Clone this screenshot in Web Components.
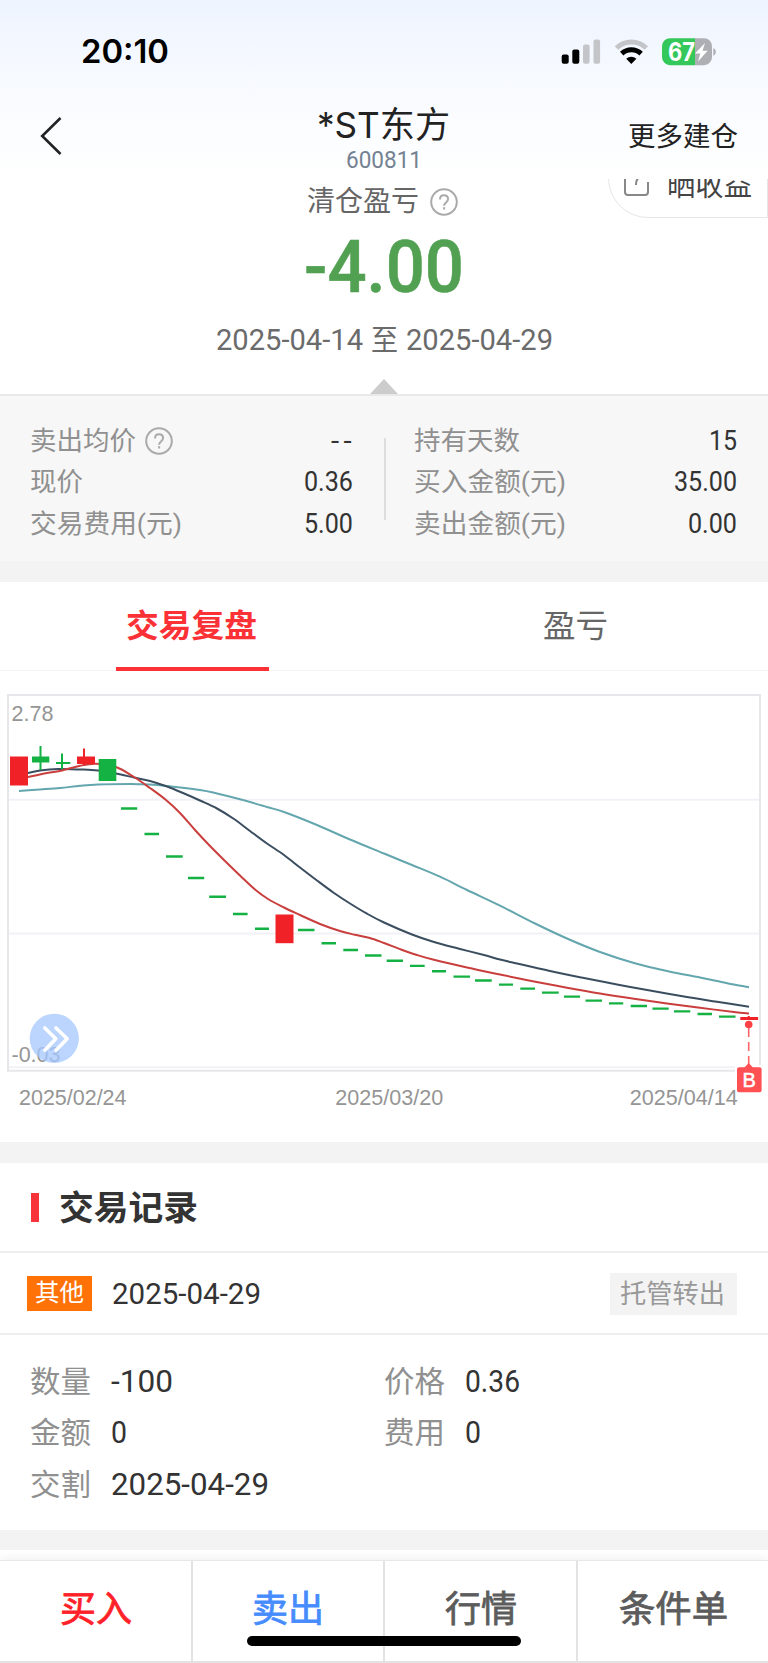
<!DOCTYPE html>
<html lang="zh-CN">
<head>
<meta charset="utf-8">
<title>*ST东方 600811</title>
<style>
  body {
    margin: 0;
    background: #fff;
    color: #333;
    font-family: Roboto, "Noto Sans CJK SC", sans-serif;
  }
</style>
</head>
<body>
<stock-page></stock-page>

<script>
// Text squeezed or stretched horizontally to a given width
class FitText extends HTMLElement {
  constructor() {
    super();
    this.attachShadow({ mode: "open" });
  }

  static get styles() {
    return /* css */`
      :host {
        display: inline-block;
        flex: none;
        white-space: nowrap;
      }

      span {
        display: inline-block;
        transform-origin: 0 50%;
      }
    `;
  }

  connectedCallback() {
    this.shadowRoot.innerHTML = /* html */`
    <style>${FitText.styles}</style>
    <span><slot></slot></span>`;
    const span = this.shadowRoot.querySelector("span");
    const width = Number(this.getAttribute("w"));
    const natural = span.getBoundingClientRect().width;
    if (width && natural) {
      span.style.transform = `scaleX(${width / natural})`;
      this.style.width = `${width}px`;
    }
  }
}

class StatusBar extends HTMLElement {
  constructor() {
    super();
    this.attachShadow({ mode: "open" });
  }

  static get styles() {
    return /* css */`
      :host {
        display: flex;
        justify-content: space-between;
        align-items: center;
        height: 103px;
        padding: 0 52px 0 81px;
        box-sizing: border-box;
        font-family: Inter, sans-serif;
        color: #000;
      }

      .time {
        font-size: 32px;
        font-weight: 600;
        line-height: 40px;
      }

      .icons {
        display: block;
      }
    `;
  }

  connectedCallback() {
    this.shadowRoot.innerHTML = /* html */`
    <style>${StatusBar.styles}</style>
    <fit-text class="time" w="88">20:10</fit-text>
    <svg class="icons" width="155" height="30" viewBox="561 36.5 155 30">
      <rect x="561.7" y="54" width="7" height="9.2" rx="2"/>
      <rect x="572.3" y="49" width="7" height="14.2" rx="2"/>
      <g fill="#c3c5c9">
        <rect x="583" y="44" width="6.6" height="19.2" rx="2"/>
        <rect x="593.5" y="39" width="6.6" height="24.2" rx="2"/>
      </g>
      <g fill="none" stroke-width="5">
        <path d="M616.5 47.5a21.3 21.3 0 0 1 29.8 0" stroke="#c3c5c9"/>
        <path d="M621.7 53.2a14.2 14.2 0 0 1 19.4 0" stroke="#000"/>
      </g>
      <path d="M626.2 58.2a7.8 7.8 0 0 1 10.2 0l-5.1 5.4z"/>
      <path d="M670 37.7h25v27h-25a8 8 0 0 1-8-8v-11a8 8 0 0 1 8-8z" fill="#34c759"/>
      <path d="M695 37.7h9a8 8 0 0 1 8 8v11a8 8 0 0 1-8 8h-9z" fill="#adafb4"/>
      <path d="M713.3 47.5q2.6 1.2 2.6 4t-2.6 4z" fill="#adafb4"/>
      <text x="668" y="60" font-size="25" font-weight="700" fill="#fff" textLength="27" lengthAdjust="spacingAndGlyphs">67</text>
      <path d="M705 42.5l-10 10.5h5.3l-2.3 8 9.7-10.7h-5.2z" fill="#fff"/>
    </svg>`;
  }
}

class NavBar extends HTMLElement {
  constructor() {
    super();
    this.attachShadow({ mode: "open" });
  }

  static get styles() {
    return /* css */`
      :host {
        display: grid;
        grid-template-columns: 1fr auto 1fr;
        align-items: start;
        height: 76px;
      }

      .back {
        margin: 13px 0 0 39px;
      }

      .title {
        display: flex;
        flex-direction: column;
        align-items: center;
        padding-top: 3px;
        color: #222;
      }

      .name {
        margin-right: 1px;
        font-family: Inter, "Noto Sans CJK SC", sans-serif;
        font-size: 36px;
        line-height: 38px;
      }

      .code {
        margin-top: 4px;
        font-size: 24px;
        line-height: 24px;
        color: #748292;
      }

      .more {
        justify-self: end;
        margin: 16px 30px 0 0;
        font-size: 27px;
        line-height: 36px;
        color: #222;
      }
    `;
  }

  connectedCallback() {
    this.shadowRoot.innerHTML = /* html */`
    <style>${NavBar.styles}</style>
    <svg class="back" width="24" height="40" viewBox="0 0 24 40" fill="none" stroke="#222" stroke-width="2.6">
      <path d="M21.5 2 3.2 20l18.3 18"/>
    </svg>
    <div class="title">
      <fit-text class="name" w="133">*ST东方</fit-text>
      <fit-text class="code" w="76">600811</fit-text>
    </div>
    <fit-text class="more" w="110">更多建仓</fit-text>`;
  }
}

class HelpIcon extends HTMLElement {
  constructor() {
    super();
    this.attachShadow({ mode: "open" });
  }

  connectedCallback() {
    this.shadowRoot.innerHTML = /* html */`
    <style>
      :host { display: inline-block; flex: none; width: 28px; height: 28px; }
      svg { display: block; }
    </style>
    <svg width="28" height="28" viewBox="0 0 28 28" fill="none" stroke="#aaa" stroke-width="2">
      <circle cx="14" cy="14" r="12.8"/>
      <path d="M10 11.4c0-2.5 1.6-4.2 4-4.2s4.1 1.5 4.1 3.9c0 3.2-4 3.4-4 6.6"/>
      <path d="M14.1 19.2v2.3"/>
    </svg>`;
  }
}

class ProfitSummary extends HTMLElement {
  constructor() {
    super();
    this.attachShadow({ mode: "open" });
  }

  static get styles() {
    return /* css */`
      :host {
        display: flex;
        flex-direction: column;
        align-items: center;
        height: 217px;
        box-sizing: border-box;
        border-bottom: 2px solid #e9e9e9;
        position: relative;
        overflow: hidden;
      }

      .label {
        display: flex;
        align-items: center;
        gap: 11px;
        height: 46px;
        padding-right: 4px;
        font-size: 28px;
        line-height: 40px;
        color: #666;
      }

      .amount {
        font-size: 73px;
        line-height: 84px;
        font-weight: 500;
        -webkit-text-stroke: .6px;
        color: #52a052;
      }

      .period {
        display: flex;
        gap: 8px;
        margin-top: 11px;
        font-size: 30px;
        line-height: 40px;
        color: #6b6b6b;
      }

      .arrow {
        width: 28px;
        height: 15px;
        margin-top: auto;
        background: #ccc;
        clip-path: polygon(50% 0, 100% 100%, 0 100%);
      }

      /* floats over the summary, half scrolled under the header */
      .share {
        position: absolute;
        left: 608px;
        top: -42px;
        width: 160px;
        height: 81px;
        box-sizing: border-box;
        border: 1px solid #e6e6e6;
        border-radius: 40px 0 0 40px;
        display: flex;
        align-items: center;
        gap: 18px;
        padding: 18px 0 0 15px;
        font-size: 28px;
        line-height: 40px;
        color: #444;
      }

      .share svg {
        margin-bottom: 5px;
      }
    `;
  }

  connectedCallback() {
    this.shadowRoot.innerHTML = /* html */`
    <style>${ProfitSummary.styles}</style>
    <div class="label"><fit-text w="112">清仓盈亏</fit-text><help-icon></help-icon></div>
    <fit-text class="amount" w="160">-4.00</fit-text>
    <div class="period">
      <fit-text w="147">2025-04-14</fit-text>
      <fit-text w="27">至</fit-text>
      <fit-text w="147">2025-04-29</fit-text>
    </div>
    <div class="arrow"></div>
    <div class="share">
      <svg width="25" height="26" viewBox="0 0 25 26" fill="none" stroke="#888" stroke-width="2">
        <path d="M8 2H4a3 3 0 0 0-3 3v16a3 3 0 0 0 3 3h17a3 3 0 0 0 3-3V11M12 14c0-7 4-10 9-11"/>
      </svg>
      <fit-text w="85">晒收益</fit-text>
    </div>`;
  }
}

class StatItem extends HTMLElement {
  constructor() {
    super();
    this.attachShadow({ mode: "open" });
  }

  static get styles() {
    return /* css */`
      :host {
        display: flex;
        justify-content: space-between;
        align-items: center;
        height: 41.5px;
        line-height: 40px;
      }

      .label {
        display: flex;
        align-items: center;
        gap: 9px;
        font-size: 26.4px;
        color: #909090;
      }

      .value {
        font-size: 27px;
      }

      .empty {
        letter-spacing: 4px;
        margin-right: -3px;
      }
    `;
  }

  connectedCallback() {
    const [labelWidth, valueWidth] = this.getAttribute("widths").split(" ");
    const value = this.getAttribute("value");
    this.shadowRoot.innerHTML = /* html */`
    <style>${StatItem.styles}</style>
    <span class="label">
      <fit-text w="${labelWidth}">${this.getAttribute("label")}</fit-text>
      ${this.hasAttribute("help") ? "<help-icon></help-icon>" : ""}
    </span>
    <fit-text class="value ${value === "--" ? "empty" : ""}" w="${valueWidth}">${value}</fit-text>`;
  }
}

class StatsPanel extends HTMLElement {
  constructor() {
    super();
    this.attachShadow({ mode: "open" });
  }

  static get styles() {
    return /* css */`
      :host {
        display: grid;
        grid-template-columns: 323px 2px 320px;
        gap: 31px;
        height: 165px;
        box-sizing: border-box;
        padding: 24px 31px 0 30px;
        background: #f7f7f7;
      }

      .line {
        height: 82px;
        margin-top: 18px;
        background: #ddd;
      }

      .line + div {
        margin-left: -3px;
      }
    `;
  }

  connectedCallback() {
    this.shadowRoot.innerHTML = /* html */`
    <style>${StatsPanel.styles}</style>
    <div>
      <stat-item label="卖出均价" value="--" widths="106 25" help></stat-item>
      <stat-item label="现价" value="0.36" widths="53 49"></stat-item>
      <stat-item label="交易费用(元)" value="5.00" widths="152 49"></stat-item>
    </div>
    <div class="line"></div>
    <div>
      <stat-item label="持有天数" value="15" widths="106 28"></stat-item>
      <stat-item label="买入金额(元)" value="35.00" widths="152 63"></stat-item>
      <stat-item label="卖出金额(元)" value="0.00" widths="152 49"></stat-item>
    </div>`;
  }
}

class ReviewTabs extends HTMLElement {
  constructor() {
    super();
    this.attachShadow({ mode: "open" });
  }

  static get styles() {
    return /* css */`
      :host {
        display: grid;
        grid-template-columns: 1fr 1fr;
        justify-items: center;
        height: 89px;
        box-sizing: border-box;
        border-bottom: 1px solid #f5f5f5;
        font-size: 32px;
        line-height: 89px;
        color: #666;
      }

      .tab {
        height: 89px;
        box-sizing: border-box;
        padding-right: 2px;
      }

      .active {
        width: 153px;
        padding-right: 3px;
        text-align: center;
        font-weight: 700;
        color: #fb3136;
        border-bottom: 4px solid #fb3136;
      }
    `;
  }

  connectedCallback() {
    this.shadowRoot.innerHTML = /* html */`
    <style>${ReviewTabs.styles}</style>
    <div class="tab active"><fit-text w="131">交易复盘</fit-text></div>
    <div class="tab"><fit-text w="65">盈亏</fit-text></div>`;
  }
}

const UP = "#f02228";
const DOWN = "#14b143";

// x, width, top, height, colour, then the wick: x, top, bottom
const CANDLES = [
  [10, 18, 756.5, 29, UP],
  [32, 17.3, 756.5, 6, DOWN, 40.5, 746, 770],
  [56, 14.3, 762, 2, DOWN, 62, 753.5, 769],
  [77, 18, 756.5, 7.5, UP, 84, 748.5, 765],
  [98.7, 17.6, 759, 22, DOWN],
  [275.5, 18, 914.5, 28.7, UP],
  [740.3, 17.8, 1017, 3, UP, 748.8, 1016, 1020]
];

// limit-down days: x1, x2, y
const DASHES = [
  [121, 137.2, 808.5], [144.5, 159, 834], [166, 182.7, 856.5], [188, 204.2, 878],
  [209.2, 226, 896.7], [233, 247.6, 914], [255, 269, 928.7], [298, 314.5, 930],
  [321.5, 336, 943.3], [343.3, 358, 950], [365, 381.5, 955.5], [386.7, 403, 960.7],
  [410, 424.7, 965.9], [432, 446, 971.2], [453.5, 470, 976.6], [475, 491.7, 980.5],
  [499, 513, 984.6], [520.3, 535, 988.6], [542, 558.7, 992.6], [564, 580, 996.6],
  [585.5, 602, 1000.6], [609, 623.2, 1003.4], [630.7, 647, 1006], [652.5, 668.7, 1008.6],
  [674, 690.3, 1011.4], [697.5, 712, 1014], [719, 735.5, 1016.6]
];

const AVERAGES = [
  ["#64a6ae", "19,791 40,789.5 60,788 80,785.8 98,784.5 130,784 150,784.5 167,786 200,790 217,793.5 240,799.3 267,807 284,812 317,825 350,839.5 384,853.5 412,865 440,876.7 467,890 500,905.7 534,923 567,938.5 600,952 634,963 667,971 700,977.5 717,981 734,984.5 749,987.2"],
  ["#3b4e5f", "19,775 28,773 40,770.5 58,769 80,769.5 98,770.5 116,773.5 134,777.5 150,781 167,786.5 183,793 200,800.5 217,808.5 234,819 250,831 267,843.5 284,855 300,867.5 317,880.5 334,893 350,903.5 367,913.7 384,922.5 412,934.5 434,942 459,948.7 484,955 500,959.5 517,963.5 550,971 584,978 617,984.5 650,990.5 684,996.5 717,1001.7 749,1006.7"],
  ["#c93f3d", "19,779 28,777 47,773 62,770.5 80,765.8 96,763.8 116,767 134,777 150,788 166,800 180,813 195,830 210,846 225,861 241,876.5 255,889.5 268,899 284,907.5 300,915 320,924 340,931 355,934.8 369,937.8 384,943 401,949.5 417,955 434,959.8 467,967.5 500,974.5 534,981.5 567,987.7 600,993.5 634,998.8 667,1003.5 700,1007.8 734,1012 749,1013.5"]
];

class KlineChart extends HTMLElement {
  constructor() {
    super();
    this.attachShadow({ mode: "open" });
  }

  static get styles() {
    return /* css */`
      :host {
        display: block;
        height: 471px;
      }

      svg {
        display: block;
      }

      text {
        font: 21.5px "Liberation Sans", sans-serif;
        fill: #959595;
      }
    `;
  }

  // smooth curve that passes through every point
  curve(list) {
    const p = list.split(" ").map(pair => pair.split(",").map(Number));
    let d = `M${p[0]}`;
    for (let i = 0; i < p.length - 1; i++) {
      const a = p[i - 1] ?? p[i];
      const [b, c] = [p[i], p[i + 1]];
      const e = p[i + 2] ?? c;
      d += `C${b[0] + (c[0] - a[0]) / 6} ${b[1] + (c[1] - a[1]) / 6} `
        + `${c[0] - (e[0] - b[0]) / 6} ${c[1] - (e[1] - b[1]) / 6} ${c}`;
    }
    return d;
  }

  candle([x, w, y, h, color, wx, top, bottom]) {
    const wick = wx ? `<path d="M${wx} ${top}V${bottom}" stroke="${color}" stroke-width="2"/>` : "";
    return `<rect x="${x}" y="${y}" width="${w}" height="${h}" fill="${color}"/>${wick}`;
  }

  connectedCallback() {
    this.shadowRoot.innerHTML = /* html */`
    <style>${KlineChart.styles}</style>
    <svg width="768" height="471" viewBox="0 671 768 471">
      <path d="M8 799.7H760M8 933.5H760M8 1067.3H735" stroke="#f1f1f8" stroke-width="2"/>
      <path d="M735 1070.7H8V695H760V1065" fill="none" stroke="#e7e7eb" stroke-width="2"/>
      <text x="11.5" y="721" textLength="42" lengthAdjust="spacingAndGlyphs">2.78</text>
      <text x="11.5" y="1062" textLength="49" lengthAdjust="spacingAndGlyphs">-0.03</text>
      <g fill="none" stroke-width="2">
        ${AVERAGES.map(([color, list]) => `<path d="${this.curve(list)}" stroke="${color}"/>`).join("")}
      </g>
      ${CANDLES.map(c => this.candle(c)).join("")}
      <path d="${DASHES.map(([a, b, y]) => `M${a} ${y}H${b}`).join("")}" stroke="${DOWN}" stroke-width="2.4"/>
      <circle cx="54.3" cy="1038.3" r="24.6" fill="#a5c8ff" fill-opacity=".76"/>
      <path d="M44.8 1028l11 10.8-11 11.4M56 1028l11.2 10.8L56 1050.2" fill="none" stroke="#fff" stroke-width="3.6" stroke-linecap="round" stroke-linejoin="round"/>
      <circle cx="748.7" cy="1024.5" r="3.8" fill="#ff4044"/>
      <path d="M748.7 1028V1066" stroke="#ff6669" stroke-width="1.6" stroke-dasharray="9 5"/>
      <path d="M744 1068l4.7-5 4.7 5z" fill="#ff5054"/>
      <rect x="737" y="1067.3" width="24.6" height="25" rx="2" fill="#ff5054"/>
      <text x="742.4" y="1087" style="font-size:20px;fill:#fff;stroke:#fff;stroke-width:.5">B</text>
      <text x="19" y="1105" textLength="107.5" lengthAdjust="spacingAndGlyphs">2025/02/24</text>
      <text x="335.3" y="1105" textLength="108" lengthAdjust="spacingAndGlyphs">2025/03/20</text>
      <text x="629.7" y="1105" textLength="108" lengthAdjust="spacingAndGlyphs">2025/04/14</text>
    </svg>`;
  }
}

class TradeRecord extends HTMLElement {
  constructor() {
    super();
    this.attachShadow({ mode: "open" });
  }

  static get styles() {
    return /* css */`
      :host {
        display: block;
        height: 367px;
      }

      .title {
        display: flex;
        align-items: center;
        gap: 20px;
        height: 90px;
        box-sizing: border-box;
        padding: 2px 31px 0;
        border-bottom: 2px solid #eee;
        font-size: 34px;
        font-weight: 700;
        line-height: 42px;
      }

      .title::before {
        content: "";
        width: 8px;
        height: 29px;
        margin-bottom: 2px;
        background: #f9333a;
      }

      .head {
        display: flex;
        align-items: center;
        height: 82px;
        box-sizing: border-box;
        padding: 1px 31px 0 27px;
        border-bottom: 2px solid #eee;
        font-size: 29.5px;
        line-height: 40px;
      }

      .badge {
        padding: 0 8px;
        margin-right: 20px;
        background: #ff7207;
        color: #fff;
        font-size: 24px;
        line-height: 35px;
      }

      .tag {
        margin-left: auto;
        padding: 0 12px 0 10px;
        background: #f3f3f3;
        color: #999;
        font-size: 26px;
        line-height: 42px;
      }

      .fields {
        display: grid;
        grid-template-columns: 354px 1fr;
        grid-auto-rows: 51.6px;
        align-items: center;
        padding: 21px 30px 0;
        font-size: 31px;
        line-height: 44px;
      }

      .fields div {
        display: flex;
        gap: 20px;
      }

      .fields .name {
        font-size: 30px;
        color: #909090;
      }
    `;
  }

  connectedCallback() {
    const fields = [
      ["数量", "-100", 62],
      ["价格", "0.36", 55],
      ["金额", "0", 16],
      ["费用", "0", 16],
      ["交割", "2025-04-29", 158]
    ];
    this.shadowRoot.innerHTML = /* html */`
    <style>${TradeRecord.styles}</style>
    <div class="title"><fit-text w="139">交易记录</fit-text></div>
    <div class="head">
      <span class="badge"><fit-text w="49">其他</fit-text></span>
      <fit-text w="149">2025-04-29</fit-text>
      <span class="tag"><fit-text w="105">托管转出</fit-text></span>
    </div>
    <div class="fields">
      ${fields.map(([name, value, w]) => `
      <div><fit-text class="name" w="61">${name}</fit-text><fit-text w="${w}">${value}</fit-text></div>`).join("")}
    </div>`;
  }
}

class ActionBar extends HTMLElement {
  constructor() {
    super();
    this.attachShadow({ mode: "open" });
  }

  static get styles() {
    return /* css */`
      :host {
        display: grid;
        grid-template-columns: 191px 192px 193px 192px;
        height: 103px;
        margin-top: 10px;
        box-sizing: border-box;
        border-top: 1px solid #e8e8e8;
        border-bottom: 2px solid #e3e3e3;
        box-shadow: 0 -2px 8px rgb(0 0 0 / 6%);
        position: relative;
        font-size: 36px;
        -webkit-text-stroke: .8px;
        line-height: 99px;
        text-align: center;
        color: #5c5c5c;
      }

      div + div {
        border-left: 2px solid #e3e3e3;
      }

      .buy { color: #ff2028; }
      .sell { color: #468cff; }

      /* home indicator lies over the bar */
      .home {
        position: absolute;
        left: 247px;
        bottom: 15px;
        width: 274px;
        height: 10px;
        border-radius: 5px;
        background: #000;
      }
    `;
  }

  connectedCallback() {
    this.shadowRoot.innerHTML = /* html */`
    <style>${ActionBar.styles}</style>
    <div class="buy"><fit-text w="72">买入</fit-text></div>
    <div class="sell"><fit-text w="72">卖出</fit-text></div>
    <div><fit-text w="72">行情</fit-text></div>
    <div><fit-text w="109">条件单</fit-text></div>
    <span class="home"></span>`;
  }
}

class StockPage extends HTMLElement {
  constructor() {
    super();
    this.attachShadow({ mode: "open" });
  }

  static get styles() {
    return /* css */`
      :host {
        display: block;
        width: 768px;
        height: 1663px;
        overflow: hidden;
      }

      header {
        height: 179px;
        background: linear-gradient(#eef4ff, #f7faff 45%, #fff);
      }

      hr {
        height: 21px;
        margin: 0;
        border: 0;
        background: #f3f3f3;
      }
    `;
  }

  connectedCallback() {
    this.shadowRoot.innerHTML = /* html */`
    <style>${StockPage.styles}</style>
    <header>
      <status-bar></status-bar>
      <nav-bar></nav-bar>
    </header>
    <profit-summary></profit-summary>
    <stats-panel></stats-panel>
    <hr>
    <review-tabs></review-tabs>
    <kline-chart></kline-chart>
    <hr>
    <trade-record></trade-record>
    <hr style="height: 20px">
    <action-bar></action-bar>`;
  }
}

customElements.define("fit-text", FitText);
customElements.define("help-icon", HelpIcon);
customElements.define("status-bar", StatusBar);
customElements.define("nav-bar", NavBar);
customElements.define("profit-summary", ProfitSummary);
customElements.define("stat-item", StatItem);
customElements.define("stats-panel", StatsPanel);
customElements.define("review-tabs", ReviewTabs);
customElements.define("kline-chart", KlineChart);
customElements.define("trade-record", TradeRecord);
customElements.define("action-bar", ActionBar);
customElements.define("stock-page", StockPage);
</script>
</body>
</html>
